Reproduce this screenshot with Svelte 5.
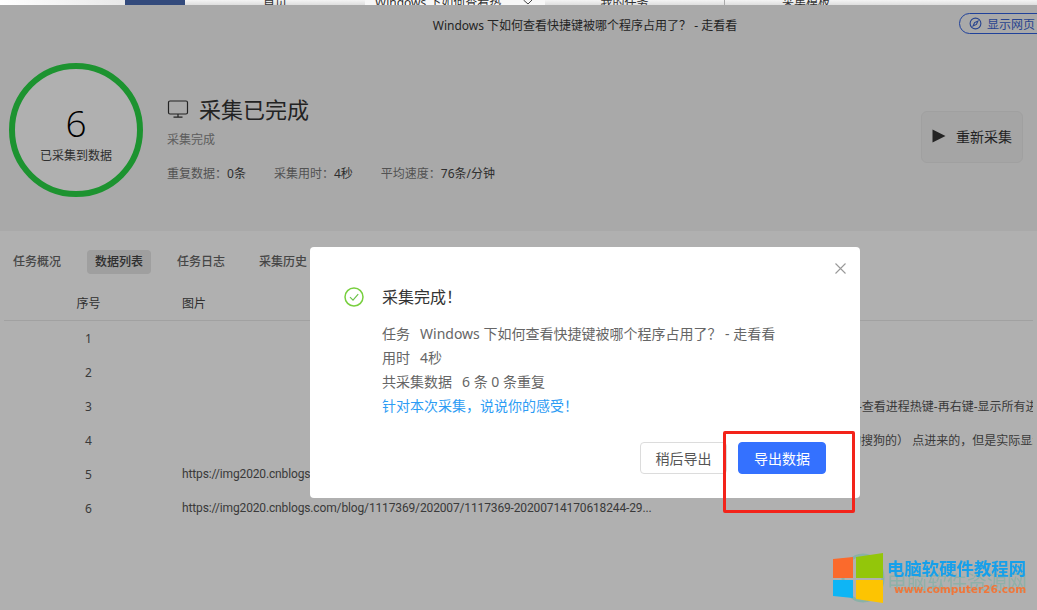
<script>
  const tabs = ['任务概况', '数据列表', '任务日志', '采集历史'];
  const stats = [
    { label: '重复数据：', value: '0条' },
    { label: '采集用时：', value: '4秒' },
    { label: '平均速度：', value: '76条/分钟' }
  ];
  const url = 'https://img2020.cnblogs.com/blog/1117369/202007/1117369-20200714170618244-29...';
  const rows = [
    { id: 1, img: '', text: '' },
    { id: 2, img: '', text: '' },
    { id: 3, img: '', text: '在任务栏上右键打开任务管理器再-查看进程热键-再右键-显示所有进程的热键信息' },
    { id: 4, img: '', text: '我从 搜索引擎（百度、谷歌、用的搜狗的）\u00a0点进来的，但是实际显示的页面内容不一样' },
    { id: 5, img: url, text: '' },
    { id: 6, img: url, text: '' }
  ];
</script>

<div class="browser-tabs">
  <div class="strip s-blank"></div>
  <div class="strip s-navy"></div>
  <div class="strip s-tab"><span>首页</span></div>
  <div class="strip s-active"><span>Windows 下如何查看热</span>
    <svg class="tab-x" width="9" height="5" viewBox="0 0 9 5" fill="none" stroke="#444"><path d="M.5 0 5 4M9 0 5 4" /></svg>
  </div>
  <div class="strip s-tab s-mine"><span>我的任务</span></div>
  <div class="strip s-tab s-tpl"><span>采集模板</span></div>
</div>

<div class="page">
  <header class="topbar">
    <span class="page-title">Windows 下如何查看快捷键被哪个程序占用了？ - 走看看</span>
    <button class="show-page">
      <svg width="13" height="13" viewBox="0 0 14 14" fill="none" stroke="currentColor" stroke-width="1.2">
        <circle cx="7" cy="7" r="5.8" />
        <path d="M9.6 4.4 8 8 4.4 9.6 6 6Z" />
      </svg>
      显示网页
    </button>
  </header>

  <section class="summary">
    <div class="ring">
      <div class="count">6</div>
      <div class="count-label">已采集到数据</div>
    </div>
    <div class="info">
      <h1>
        <svg width="22" height="20" viewBox="0 0 22 20" fill="none" stroke="currentColor" stroke-width="1.2">
          <rect x="1.500" y="2" width="19" height="13" rx="1.500" />
          <path d="M11 15v3M6.500 18.200h9" />
        </svg>
        采集已完成
      </h1>
      <p class="sub">采集完成</p>
      <div class="stats">
        {#each stats as s}
          <span><em>{s.label}</em>{s.value}</span>
        {/each}
      </div>
    </div>
    <button class="restart">
      <svg width="14" height="14" viewBox="0 0 14 14"><path d="M0.500 0.500 13.500 7 0.500 13.500Z" fill="currentColor" /></svg>
      重新采集
    </button>
  </section>

  <section class="content">
    <nav class="tabs">
      {#each tabs as t, i}
        <span class="tab" class:active={i === 1}>{t}</span>
      {/each}
    </nav>
    <div class="thead">
      <div class="c-id">序号</div>
      <div class="c-img">图片</div>
    </div>
    {#each rows as r}
      <div class="row">
        <div class="c-id">{r.id}</div>
        <div class="c-img">{r.img}</div>
        <div class="c-text">{r.text}</div>
      </div>
    {/each}
  </section>
</div>

<div class="mask"></div>

<div class="dialog">
  <button class="close" aria-label="关闭">
    <svg width="11" height="11" viewBox="0 0 11 11" stroke="currentColor" stroke-width="1.1" fill="none"><path d="M.5.5l10 10M10.500.5l-10 10" /></svg>
  </button>
  <div class="d-head">
    <svg width="20" height="20" viewBox="0 0 20 20" fill="none" stroke="#78cf3f" stroke-width="1.500">
      <circle cx="10" cy="10" r="9" />
      <path d="M6 10.200l3 3 5.200-6" stroke="#6cc24a" stroke-width="1.200" />
    </svg>
    <span>采集完成！</span>
  </div>
  <div class="d-body">
    <p><b>任务</b>Windows 下如何查看快捷键被哪个程序占用了？ - 走看看</p>
    <p><b>用时</b>4秒</p>
    <p><b>共采集数据</b>6 条 0 条重复</p>
    <p class="feedback">针对本次采集，说说你的感受！</p>
  </div>
  <div class="d-foot">
    <button class="btn">稍后导出</button>
    <button class="btn primary">导出数据</button>
  </div>
</div>

<div class="annotation"></div>

<div class="watermark">
  <svg class="wm-logo" width="52" height="50" viewBox="0 0 52 50">
    <ellipse cx="30" cy="25" rx="20" ry="23" fill="none" stroke="#6fb0a0" stroke-width="3" opacity=".6" />
    <path d="M0 6 20 4V25H0Z" fill="#fb6a2c" />
    <path d="M23 4 50 0V25H23Z" fill="#93c60a" />
    <path d="M0 27H20V45L0 43Z" fill="#0eb5f5" />
    <path d="M23 27H50V50L23 46Z" fill="#fdc402" />
  </svg>
  <div class="wm-text">
    <div class="wm-ghost">电脑软件资源网</div>
    <div class="wm-cn">电脑软硬件教程网</div>
    <div class="wm-url">www.computer26.com</div>
  </div>
</div>

<style>
  :global(body) {
    margin: 0;
    background: #fff;
    font-family: "Noto Sans", "Noto Sans CJK SC", sans-serif;
    overflow: hidden;
  }

  button {
    font-family: inherit;
    cursor: pointer;
  }

  .browser-tabs {
    position: relative;
    z-index: 3;
    display: flex;
    height: 5px;
    overflow: hidden;
    background: linear-gradient(#f4f4f4, #dedede);
    font-size: 12px;
    color: #333;
  }

  .strip {
    display: flex;
    align-items: center;
    justify-content: center;
    height: 5px;
    flex: none;
    white-space: nowrap;
    position: relative;
    overflow: hidden;
  }

  .strip span {
    line-height: 14px;
    flex: none;
  }

  .s-blank { width: 125px; background: linear-gradient(90deg, #fff, #e8e8e8); }
  .s-navy { width: 60px; background: #334a7c; }
  .s-tab { width: 180px; background: linear-gradient(#f4f4f4, #dedede); }
  .s-active { width: 180px; background: #f7f7f7; justify-content: flex-start; padding-left: 10px; box-sizing: border-box; }
  .tab-x { position: absolute; left: 158px; top: 0; }
  .s-mine { box-sizing: border-box; border-right: 1px solid #aaa; padding-right: 20px; }
  .s-tpl { width: 162px; }

  .page {
    background: #f5f5f5;
    height: 605px;
    overflow: hidden;
  }

  .topbar {
    height: 40px;
    display: flex;
    align-items: center;
    justify-content: center;
    position: relative;
    padding-left: 133px;
  }

  .page-title {
    font-size: 12px;
    color: #333;
  }

  .show-page {
    position: absolute;
    left: 959px;
    top: 8px;
    width: 90px;
    height: 21px;
    box-sizing: border-box;
    border: 1px solid #2f5fe0;
    border-radius: 11px;
    background: transparent;
    color: #3a63cf;
    font-size: 12px;
    padding: 0 0 0 9px;
    display: flex;
    align-items: center;
    gap: 5px;
  }

  .summary {
    height: 186px;
    display: flex;
    align-items: flex-start;
    padding: 18px 14px 0 9px;
    box-sizing: border-box;
  }

  .ring {
    width: 134px;
    height: 134px;
    box-sizing: border-box;
    border: 6px solid #2ad646;
    border-radius: 50%;
    background: #fff;
    text-align: center;
    flex: none;
    color: #000;
  }

  .count {
    font-size: 37px;
    line-height: 44px;
    margin-top: 32px;
    font-family: "Open Sans", sans-serif;
    font-weight: 300;
  }

  .count-label {
    font-size: 12px;
    line-height: 16px;
    margin-top: 3px;
    color: #444;
  }

  .info {
    margin-left: 24px;
    flex: 1;
    padding-top: 30px;
  }

  h1 {
    margin: 0;
    font-size: 22px;
    line-height: 32px;
    font-weight: 400;
    color: #333;
    display: flex;
    align-items: center;
    gap: 10px;
  }

  .sub {
    margin: 6px 0 0;
    font-size: 12px;
    line-height: 18px;
    color: #888;
  }

  .stats {
    display: flex;
    gap: 28px;
    margin-top: 16px;
    font-size: 12px;
    line-height: 18px;
    color: #444;
  }

  .stats em {
    font-style: normal;
    color: #777;
  }

  .restart {
    margin-top: 48px;
    width: 102px;
    height: 52px;
    box-sizing: border-box;
    border: 1px solid #e8e8e8;
    border-radius: 6px;
    background: #f0f0f0;
    color: #333;
    font-size: 14px;
    padding: 0 0 2px 10px;
    display: flex;
    align-items: center;
    gap: 10px;
  }

  .content {
    background: #fff;
    height: 379px;
    padding: 19px 4px 0;
  }

  .tabs {
    display: flex;
    gap: 18px;
    height: 24px;
    align-items: center;
    margin-left: 1px;
  }

  .tab {
    font-size: 12px;
    line-height: 24px;
    padding: 0 8px;
    color: #666;
    font-weight: 500;
    border-radius: 4px;
  }

  .active {
    background: #e6e6e6;
    color: #444;
  }

  .thead {
    display: flex;
    height: 35px;
    margin-top: 11px;
    align-items: center;
    border-bottom: 1px solid #eaeaea;
    font-size: 12px;
    color: #444;
  }

  .row {
    display: flex;
    height: 34px;
    align-items: center;
    font-size: 12px;
    color: #555;
    white-space: nowrap;
  }

  .c-id {
    width: 169px;
    text-align: center;
    flex: none;
  }

  .c-img {
    margin-left: 9px;
    width: 496px;
    flex: none;
    overflow: hidden;
    font-family: Roboto, sans-serif;
    letter-spacing: -0.14px;
  }

  .thead .c-img {
    font-family: "Noto Sans CJK SC", sans-serif;
    letter-spacing: 0;
  }

  .c-text {
    overflow: hidden;
    flex: 1;
  }

  .mask {
    position: fixed;
    inset: 5px 0 0 0;
    background: rgba(0, 0, 0, 0.31);
    z-index: 1;
  }

  .dialog {
    position: fixed;
    left: 310px;
    top: 247px;
    width: 550px;
    height: 251px;
    box-sizing: border-box;
    background: #fff;
    border-radius: 4px;
    z-index: 2;
    padding: 40px 34px 0;
  }

  .close {
    position: absolute;
    right: 14px;
    top: 16px;
    width: 11px;
    height: 11px;
    padding: 0;
    border: 0;
    background: none;
    color: #999;
    display: flex;
  }

  .d-head {
    display: flex;
    align-items: center;
    gap: 18px;
    font-size: 16px;
    line-height: 20px;
    color: #333;
  }

  .d-body {
    margin: 15px 0 0 38px;
    font-size: 14px;
    line-height: 24px;
    color: #666;
  }

  .d-body p {
    margin: 0;
  }

  .d-body b {
    font-weight: 400;
    margin-right: 10px;
  }

  .feedback {
    color: #2d9cf4;
  }

  .d-foot {
    display: flex;
    justify-content: flex-end;
    gap: 11px;
    margin: 24px 0 0;
  }

  .btn {
    width: 87px;
    height: 32px;
    box-sizing: border-box;
    border: 1px solid #dcdcdc;
    border-radius: 4px;
    background: #fff;
    color: #555;
    font-size: 14px;
    padding: 0;
  }

  .primary {
    width: 88px;
    background: #3471ff;
    border-color: #3471ff;
    color: #fff;
  }

  .annotation {
    position: fixed;
    left: 723px;
    top: 431px;
    width: 132px;
    height: 82px;
    box-sizing: border-box;
    border: 3px solid #f3231a;
    border-radius: 2px;
    z-index: 3;
  }

  .watermark {
    position: fixed;
    left: 833px;
    top: 553px;
    display: flex;
    z-index: 3;
    align-items: flex-start;
  }

  .wm-text {
    margin: 5px 0 0 2px;
    position: relative;
  }

  .wm-ghost {
    position: absolute;
    left: 0;
    top: 13px;
    font-size: 20px;
    line-height: 24px;
    color: #6fb0a0;
    opacity: 0.5;
    white-space: nowrap;
  }

  .wm-cn {
    position: relative;
    font-size: 17.400px;
    line-height: 20px;
    font-weight: 700;
    color: #16a0ea;
    white-space: nowrap;
  }

  .wm-url {
    position: relative;
    font-size: 10.500px;
    line-height: 14px;
    font-weight: 700;
    color: #f0763a;
    margin: 4px 0 0 7px;
    font-family: "DejaVu Sans", sans-serif;
    white-space: nowrap;
  }
</style>
